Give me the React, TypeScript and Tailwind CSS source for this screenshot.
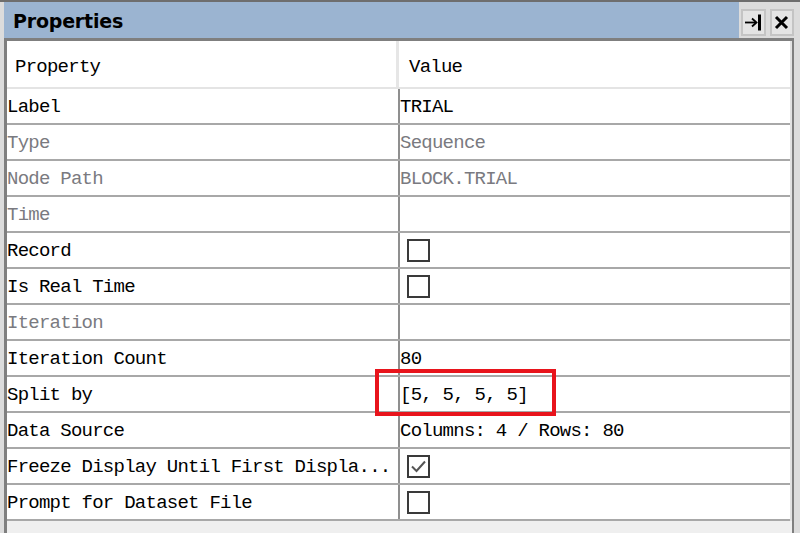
import React from 'react';

interface PropRow {
  label: string;
  value?: string;
  disabled?: boolean;
  checkbox?: 'off' | 'on';
  highlight?: boolean;
}

const rows: PropRow[] = [
  { label: 'Label', value: 'TRIAL' },
  { label: 'Type', value: 'Sequence', disabled: true },
  { label: 'Node Path', value: 'BLOCK.TRIAL', disabled: true },
  { label: 'Time', value: '', disabled: true },
  { label: 'Record', checkbox: 'off' },
  { label: 'Is Real Time', checkbox: 'off' },
  { label: 'Iteration', value: '', disabled: true },
  { label: 'Iteration Count', value: '80' },
  { label: 'Split by', value: '[5, 5, 5, 5]', highlight: true },
  { label: 'Data Source', value: 'Columns: 4 / Rows: 80' },
  { label: 'Freeze Display Until First Displa...', checkbox: 'on' },
  { label: 'Prompt for Dataset File', checkbox: 'off' },
];

const mono = "font-['Liberation_Mono',monospace] text-[19px] tracking-[-0.75px] whitespace-pre";

function CheckBox({ checked }: { checked: boolean }) {
  return (
    <div className="ml-[7px] w-[23px] h-[23px] border-2 border-[#3a3a3a] bg-white flex items-center justify-center">
      {checked && (
        <svg width="17" height="15" viewBox="0 0 17 15">
          <path d="M2 7.5 L6.5 12 L15 2.5" fill="none" stroke="#555" strokeWidth="2" />
        </svg>
      )}
    </div>
  );
}

function TitleButton({ children }: { children: React.ReactNode }) {
  return (
    <div className="w-[25px] h-[27px] bg-[#e4e4e4] border-2 border-[#c4c4c4] flex items-center justify-center">
      {children}
    </div>
  );
}

export default function App() {
  return (
    <div className="w-[800px] h-[533px] overflow-hidden bg-[#dcdcdc] border-t-2 border-[#6e6e6e] pl-[4px] pr-[6px] flex flex-col">
      {/* title bar */}
      <div className="h-[36px] flex shrink-0">
        <div className="flex-1 bg-[#9bb4d1] flex items-center pl-[9px] pt-[2px]">
          <span className="font-['DejaVu_Sans',sans-serif] font-bold text-[19px] text-black tracking-[-0.2px]">Properties</span>
        </div>
        <div className="w-[55px] flex items-center gap-[4px] pl-[2px] pt-[6px] pb-[1px]">
          <TitleButton>
            <svg width="19" height="17" viewBox="0 0 19 17">
              <path d="M1 8.5 H12" stroke="#000" strokeWidth="1.8" />
              <path d="M8 4.5 L12.5 8.5 L8 12.5" fill="none" stroke="#000" strokeWidth="1.8" />
              <rect x="14" y="0.5" width="3" height="16" fill="#000" />
            </svg>
          </TitleButton>
          <TitleButton>
            <svg width="15" height="15" viewBox="0 0 15 15">
              <path d="M2 2 L13 13 M13 2 L2 13" stroke="#000" strokeWidth="3" />
            </svg>
          </TitleButton>
        </div>
      </div>

      {/* grid */}
      <div className="flex-1 flex flex-col border-t-[3px] border-l-[3px] border-r-[2px] border-[#7f7f7f] bg-white">
        <div className="flex flex-col border-r-2 border-[#e2e2e2]">
          <div className="h-[48px] flex border-b-2 border-[#e4e4e4] text-black">
            <div className={`w-[389px] flex items-center pl-[8px] pt-[6px] ${mono}`}>Property</div>
            <div className="w-[3px] bg-[#e6e6e6]" />
            <div className={`flex-1 flex items-center pl-[10px] pt-[6px] ${mono}`}>Value</div>
          </div>
          {rows.map((r, i) => (
            <div key={i} className="h-[36px] flex border-b-2 border-[#a8a8a8]">
              <div className={`w-[391px] flex items-center pt-[2px] overflow-hidden ${mono} ${r.disabled ? 'text-[#7a7a80]' : 'text-black'}`}>
                {r.label}
              </div>
              <div className="w-[2px] bg-[#8f8f8f]" />
              <div className={`relative flex-1 flex items-center ${mono} ${r.disabled ? 'text-[#7a7a80]' : 'text-black'}`}>
                {r.checkbox ? <CheckBox checked={r.checkbox === 'on'} /> : <span className="pt-[2px]">{r.value}</span>}
                {r.highlight && (
                  <div className="absolute -left-[25px] -top-[8px] w-[181px] h-[47px] border-4 border-[#e8141c]" />
                )}
              </div>
            </div>
          ))}
        </div>
        <div className="flex-1 bg-[#efefef]" />
      </div>
    </div>
  );
}
